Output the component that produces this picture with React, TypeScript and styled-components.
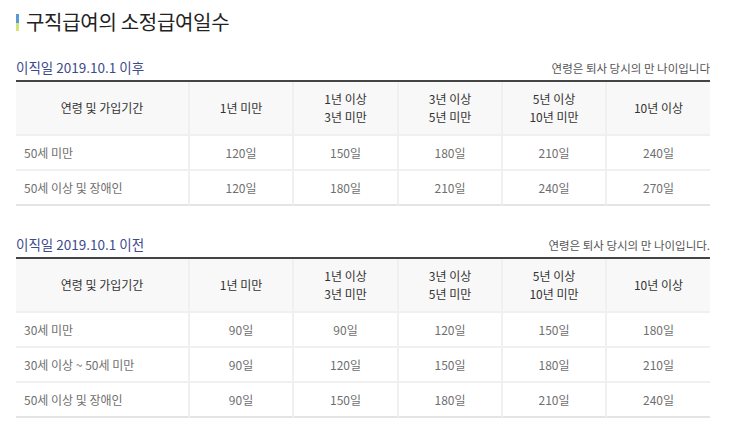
import React from "react";
import styled, { createGlobalStyle } from "styled-components";

const GlobalStyle = createGlobalStyle`
  body {
    margin: 0;
    background: #fff;
    font-family: "Noto Sans CJK KR", "Noto Sans", sans-serif;
  }
`;

const Page = styled.div`
  width: 694px;
  padding: 8px 0 0 16px;
  overflow: hidden;
`;

const Title = styled.h2`
  display: flex;
  align-items: center;
  margin: 0;
  font-size: 20px;
  font-weight: 400;
  line-height: 28px;
  color: #222;
  letter-spacing: -0.3px;
`;

const Marker = styled.span`
  width: 3px;
  height: 17px;
  margin-right: 7px;
  background: linear-gradient(to bottom, #5b9bd5 0 53%, #d3e37c 53% 100%);
`;

const Section = styled.section<{ $top: number }>`
  margin-top: ${(p) => p.$top}px;
`;

const SectionHead = styled.div`
  display: flex;
  justify-content: space-between;
  align-items: flex-end;
  height: 18px;
  margin-bottom: 4px;
`;

const Caption = styled.h3`
  margin: 0;
  font-size: 13.5px;
  font-weight: 400;
  line-height: 18px;
  color: #3d4a8c;
`;

const Note = styled.span`
  font-size: 11.5px;
  line-height: 16px;
  color: #555;
  white-space: nowrap;
`;

const Table = styled.table`
  width: 694px;
  table-layout: fixed;
  border-collapse: separate;
  border-spacing: 0;
  border-top: 2px solid #444;
  font-size: 12px;
`;

const HeadCell = styled.th`
  padding: 8px 4px;
  line-height: 18px;
  font-weight: 400;
  color: #333;
  background: #f8f8f8;
  border-bottom: 2px solid #f0f0f0;
  border-right: 2px solid #f0f0f0;
  text-align: center;
  &:last-child {
    border-right: 0;
  }
`;

const Cell = styled.td<{ $label?: boolean }>`
  padding: 9px 8px 8px;
  line-height: 16px;
  color: #6f6f6f;
  text-align: ${(p) => (p.$label ? "left" : "center")};
  border-bottom: 2px solid #f0f0f0;
  border-right: 2px solid #f0f0f0;
  &:last-child {
    border-right: 0;
  }
  tr:last-child > & {
    border-bottom-color: #e4e4e4;
  }
`;

const headers = ["1년 미만", "1년 이상\n3년 미만", "3년 이상\n5년 미만", "5년 이상\n10년 미만", "10년 이상"];
const widths = [174, 104, 105, 104, 104, 103];

type Row = { label: string; days: number[] };

const after: Row[] = [
  { label: "50세 미만", days: [120, 150, 180, 210, 240] },
  { label: "50세 이상 및 장애인", days: [120, 180, 210, 240, 270] },
];

const before: Row[] = [
  { label: "30세 미만", days: [90, 90, 120, 150, 180] },
  { label: "30세 이상 ~ 50세 미만", days: [90, 120, 150, 180, 210] },
  { label: "50세 이상 및 장애인", days: [90, 150, 180, 210, 240] },
];

const DaysTable = ({ rows }: { rows: Row[] }) => (
  <Table>
    <colgroup>
      {widths.map((w, i) => (
        <col key={i} style={{ width: w }} />
      ))}
    </colgroup>
    <thead>
      <tr>
        <HeadCell>연령 및 가입기간</HeadCell>
        {headers.map((h) => (
          <HeadCell key={h}>
            {h.split("\n").map((line, i) => (
              <React.Fragment key={i}>
                {i > 0 && <br />}
                {line}
              </React.Fragment>
            ))}
          </HeadCell>
        ))}
      </tr>
    </thead>
    <tbody>
      {rows.map((r) => (
        <tr key={r.label}>
          <Cell $label>{r.label}</Cell>
          {r.days.map((d, i) => (
            <Cell key={i}>{d}일</Cell>
          ))}
        </tr>
      ))}
    </tbody>
  </Table>
);

export default function App() {
  return (
    <Page>
      <GlobalStyle />
      <Title>
        <Marker />
        구직급여의 소정급여일수
      </Title>
      <Section $top={22}>
        <SectionHead>
          <Caption>이직일 2019.10.1 이후</Caption>
          <Note>연령은 퇴사 당시의 만 나이입니다</Note>
        </SectionHead>
        <DaysTable rows={after} />
      </Section>
      <Section $top={29}>
        <SectionHead>
          <Caption>이직일 2019.10.1 이전</Caption>
          <Note>연령은 퇴사 당시의 만 나이입니다.</Note>
        </SectionHead>
        <DaysTable rows={before} />
      </Section>
    </Page>
  );
}
